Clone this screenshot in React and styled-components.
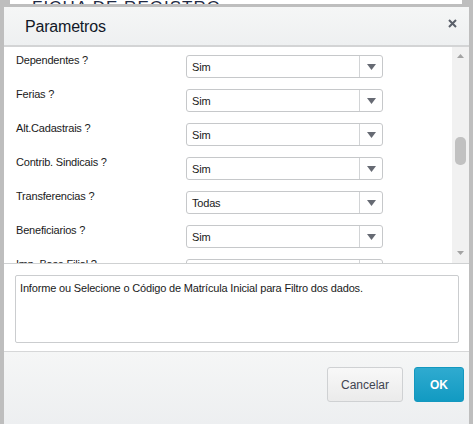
import React from "react";
import styled, { createGlobalStyle } from "styled-components";

const Global = createGlobalStyle`
  html, body { margin: 0; padding: 0; }
  body {
    background: #bebebe;
    font-family: "Liberation Sans", Arial, sans-serif;
    width: 473px;
    height: 424px;
    overflow: hidden;
  }
`;

const Page = styled.div`
  width: 473px;
  height: 424px;
  overflow: hidden;
`;

const BehindBar = styled.div`
  height: 4px;
  margin: 0 11px 0 10px;
  background: #ffffff;
  overflow: hidden;
  display: flex;
  align-items: flex-end;
  padding-left: 22px;
  font-size: 17px;
  color: #1f2a44;
  letter-spacing: 1px;
`;

const BehindText = styled.span`
  line-height: 17px;
  transform: translateY(12px);
  white-space: nowrap;
`;

const Dialog = styled.div`
  width: 465px;
  margin: 3px 0 0 4px;
  display: flex;
  flex-direction: column;
  background: #ffffff;
`;

const Header = styled.div`
  height: 38px;
  border-bottom: 2px solid #d3d4d5;
  background: linear-gradient(#f5f6f6, #eef0f1);
  display: flex;
  align-items: center;
  justify-content: space-between;
  padding: 0 12px 0 21px;
`;

const Title = styled.h1`
  margin: 0;
  font-size: 16px;
  font-weight: normal;
  color: #111827;
  padding-top: 1px;
  letter-spacing: -0.2px;
`;

const CloseButton = styled.button`
  border: 0;
  background: none;
  padding: 0;
  width: 9px;
  height: 9px;
  display: flex;
  margin-top: -6px;
  cursor: pointer;
`;

const Body = styled.div`
  height: 216px;
  display: flex;
  border-bottom: 1px solid #cfd1d2;
`;

const ScrollArea = styled.div`
  flex: 1;
  overflow: hidden;
  padding: 8px 0 0 12px;
`;

const Row = styled.div`
  display: grid;
  grid-template-columns: 170px 197px;
  align-items: start;
  height: 34px;
`;

const Label = styled.div`
  font-size: 11px;
  line-height: 13px;
  margin-top: -1px;
  color: #1a1a1a;
  letter-spacing: -0.2px;
`;

const Select = styled.div`
  height: 23px;
  box-sizing: border-box;
  border: 1px solid #c6c8ca;
  border-radius: 3px;
  display: flex;
  align-items: stretch;
  background: #fff;
`;

const SelectValue = styled.div`
  flex: 1;
  font-size: 11px;
  color: #1a1a1a;
  display: flex;
  align-items: center;
  padding-left: 5px;
  letter-spacing: -0.2px;
`;

const SelectArrow = styled.div`
  width: 22px;
  border-left: 1px solid #d2d4d6;
  display: flex;
  align-items: center;
  justify-content: center;
`;

const Scrollbar = styled.div`
  width: 17px;
  background: #f1f1f1;
  display: flex;
  flex-direction: column;
  align-items: center;
  padding: 7px 0 8px;
`;

const ScrollTrack = styled.div`
  flex: 1;
  width: 100%;
  display: flex;
  flex-direction: column;
  align-items: center;
  padding-top: 79px;
`;

const Thumb = styled.div`
  width: 11px;
  height: 28px;
  border-radius: 5px;
  background: #c1c1c1;
`;

const HelpArea = styled.div`
  padding: 11px 10px 8px 11px;
`;

const HelpBox = styled.div`
  height: 68px;
  box-sizing: border-box;
  border: 1px solid #cbcdcf;
  border-radius: 2px;
  padding: 6px 4px;
  font-size: 11px;
  line-height: 13px;
  color: #1a1a1a;
  letter-spacing: -0.17px;
`;

const Footer = styled.div`
  height: 66px;
  border-top: 1px solid #d6d7d8;
  background: linear-gradient(#f5f6f6, #eceef0);
  display: flex;
  justify-content: flex-end;
  align-items: flex-start;
  gap: 11px;
  padding: 15px 5px 0 0;
`;

const Button = styled.button`
  height: 35px;
  box-sizing: border-box;
  border-radius: 3px;
  font-family: "Liberation Sans", Arial, sans-serif;
  font-size: 12px;
  cursor: pointer;
  border: 1px solid ${(p) => (p.$primary ? "#1498bf" : "#cfd1d3")};
  background: ${(p) =>
    p.$primary
      ? "linear-gradient(#2fabd0, #129ac2)"
      : "linear-gradient(#f8f8f8, #ebebeb)"};
  color: ${(p) => (p.$primary ? "#ffffff" : "#3f4450")};
  font-weight: ${(p) => (p.$primary ? "bold" : "normal")};
  width: ${(p) => p.$width}px;
`;

const Triangle = ({ color = "#666a73", w = 9, h = 6, up = false }) => (
  <svg width={w} height={h} viewBox={`0 0 ${w} ${h}`}>
    <polygon
      points={up ? `0,${h} ${w},${h} ${w / 2},0` : `0,0 ${w},0 ${w / 2},${h}`}
      fill={color}
    />
  </svg>
);

const rows = [
  ["Dependentes ?", "Sim"],
  ["Ferias ?", "Sim"],
  ["Alt.Cadastrais ?", "Sim"],
  ["Contrib. Sindicais ?", "Sim"],
  ["Transferencias ?", "Todas"],
  ["Beneficiarios ?", "Sim"],
  ["Imp. Base Filial ?", "Sim"],
];

export default function App() {
  return (
    <Page>
      <Global />
      <BehindBar>
        <BehindText>FICHA DE REGISTRO</BehindText>
      </BehindBar>
      <Dialog>
        <Header>
          <Title>Parametros</Title>
          <CloseButton aria-label="Fechar">
            <svg width="9" height="9" viewBox="0 0 9 9">
              <path d="M1 1 L8 8 M8 1 L1 8" stroke="#5a5f69" strokeWidth="2" />
            </svg>
          </CloseButton>
        </Header>
        <Body>
          <ScrollArea>
            {rows.map(([label, value]) => (
              <Row key={label}>
                <Label>{label}</Label>
                <Select>
                  <SelectValue>{value}</SelectValue>
                  <SelectArrow>
                    <Triangle />
                  </SelectArrow>
                </Select>
              </Row>
            ))}
          </ScrollArea>
          <Scrollbar>
            <Triangle up color="#a3a3a3" w={7} h={4} />
            <ScrollTrack>
              <Thumb />
            </ScrollTrack>
            <Triangle color="#a3a3a3" w={7} h={4} />
          </Scrollbar>
        </Body>
        <HelpArea>
          <HelpBox>
            Informe ou Selecione o Código de Matrícula Inicial para Filtro dos dados.
          </HelpBox>
        </HelpArea>
        <Footer>
          <Button $width={76}>Cancelar</Button>
          <Button $primary $width={50}>OK</Button>
        </Footer>
      </Dialog>
    </Page>
  );
}
